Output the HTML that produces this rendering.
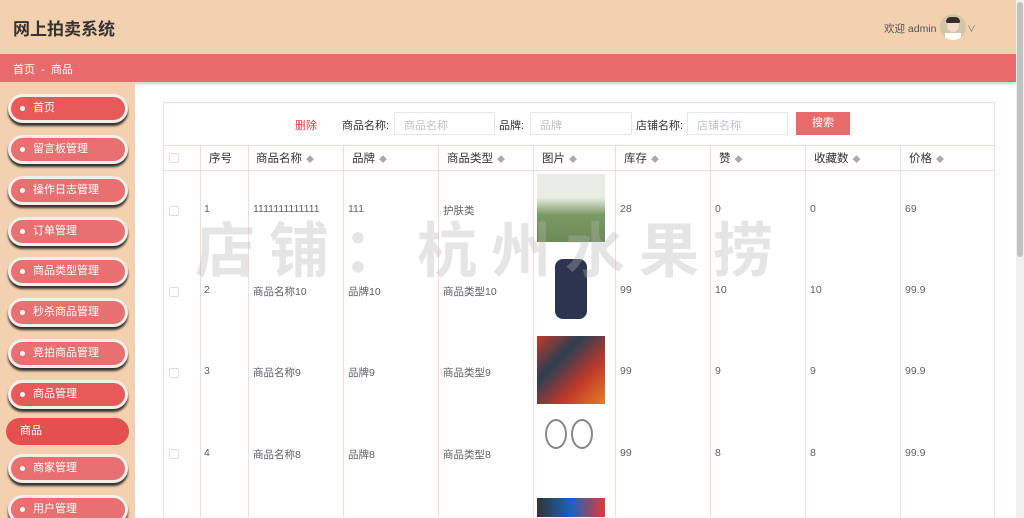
<!DOCTYPE html>
<html><head><meta charset="utf-8"><style>
*{margin:0;padding:0;box-sizing:border-box}
html,body{width:1024px;height:518px;overflow:hidden}
body{font-family:"Liberation Sans","Noto Sans CJK SC",sans-serif;background:#fff;position:relative;font-size:11px;color:#606266}
.hdr{position:absolute;left:0;top:0;width:1016px;height:54px;background:#f3d0ae}
.hdr .t{position:absolute;left:13px;top:15px;font-size:17px;font-weight:bold;color:#333}
.hdr .u{position:absolute;left:884px;top:21px;font-size:10.5px;color:#555;white-space:nowrap}
.av{position:absolute;left:940px;top:14px;width:26px;height:26px;border-radius:50%;background:#cfc7a8;overflow:hidden}
.bc{position:absolute;left:0;top:54px;width:1016px;height:28px;background:#e76b6b;color:#fff;font-size:11px;padding:7px 13px;box-shadow:0 2px 3px rgba(0,0,0,.2)}
.sb{position:absolute;left:0;top:82px;width:135px;height:436px;background:#f3d0ae}
.pill{position:absolute;left:8px;width:120px;height:29px;border-radius:15px;background:#e85a5a;border:3px solid #f3eeea;box-shadow:0 3px 2px #333;color:#fff;font-size:11px;line-height:23px;padding-left:22px}
.pill:before{content:"";position:absolute;left:9px;top:9px;width:5px;height:5px;border-radius:50%;background:#fff}
.pill.l{background:#e87070}
.sub{position:absolute;left:6px;top:418px;width:123px;height:27px;border-radius:14px;background:#e54f4f;color:#fff;line-height:27px;padding-left:14px}
.scroll{position:absolute;left:1016px;top:0;width:8px;height:518px;background:#f0f0f0}
.scroll div{position:absolute;left:1px;top:2px;width:6px;height:255px;background:#c1c1c1;border-radius:3px}
.box{position:absolute;left:163px;top:102px;width:832px;height:415px;border:1px solid #f8dada;border-bottom:none;overflow:hidden}
.srch{position:absolute;left:0;top:0;width:830px;height:43px;border-bottom:1px solid #f8dada}
.srch span{position:absolute;top:14px;font-size:11px;color:#333}
.inp{position:absolute;top:9px;height:23px;border:1px solid #e4e7ed;color:#c0c4cc;font-size:11px;padding:4px 9px}
.btn{position:absolute;left:632px;top:9px;width:54px;height:23px;background:#e76b6b;color:#fff;text-align:center;line-height:23px}
.col{position:absolute;top:43px;height:380px;border-left:1px solid #f8dada}
.th{position:absolute;top:43px;height:25px;width:830px;border-bottom:1px solid #f8dada}
.h{position:absolute;top:47px;font-size:11.5px;color:#333}
.h i{font-style:normal;color:#aaa;font-size:8px;margin-left:4px}
.c{position:absolute;font-size:10.5px;color:#606266}
.cb{position:absolute;left:5px;width:10px;height:10px;border:1px solid #dcdfe6;background:#fff;border-radius:2px}
.wm{position:absolute;left:195px;top:203px;font-size:60px;font-weight:bold;color:rgba(180,180,180,.35);letter-spacing:14px;white-space:nowrap}
.img{position:absolute;left:373px;width:68px;height:68px}
</style></head><body>
<div class="hdr"><div class="t">网上拍卖系统</div><div class="u">欢迎 admin</div>
<div class="av"><div style="position:absolute;left:7px;top:4px;width:12px;height:14px;background:#f6d9c8;border-radius:50%"></div><div style="position:absolute;left:6px;top:3px;width:14px;height:6px;background:#3a2a2a;border-radius:6px 6px 2px 2px"></div><div style="position:absolute;left:5px;top:19px;width:16px;height:8px;background:#fff"></div></div>
<div style="position:absolute;left:967px;top:22px;color:#777;font-size:9px">∨</div></div>
<div class="bc">首页 &nbsp;-&nbsp; 商品</div>
<div class="sb"></div>
<div class="pill" style="top:94px">首页</div>
<div class="pill l" style="top:135px">留言板管理</div>
<div class="pill l" style="top:176px">操作日志管理</div>
<div class="pill l" style="top:217px">订单管理</div>
<div class="pill l" style="top:257px">商品类型管理</div>
<div class="pill l" style="top:298px">秒杀商品管理</div>
<div class="pill l" style="top:339px">竞拍商品管理</div>
<div class="pill" style="top:380px">商品管理</div>
<div class="sub">商品</div>
<div class="pill l" style="top:454px">商家管理</div>
<div class="pill l" style="top:495px">用户管理</div>
<div class="box">
<div class="srch">
<span style="left:131px;color:#e53935">删除</span>
<span style="left:178px">商品名称:</span><div class="inp" style="left:230px;width:101px">商品名称</div>
<span style="left:335px">品牌:</span><div class="inp" style="left:366px;width:102px">品牌</div>
<span style="left:472px">店铺名称:</span><div class="inp" style="left:523px;width:101px">店铺名称</div>
<div class="btn">搜索</div></div>
<div class="th"></div>
<div class="col" style="left:36px"></div><div class="col" style="left:84px"></div><div class="col" style="left:179px"></div><div class="col" style="left:274px"></div><div class="col" style="left:369px"></div><div class="col" style="left:451px"></div><div class="col" style="left:546px"></div><div class="col" style="left:641px"></div><div class="col" style="left:736px"></div>
<div class="cb" style="top:50px"></div>
<div class="h" style="left:45px">序号</div>
<div class="h" style="left:92px">商品名称<i>◆</i></div>
<div class="h" style="left:188px">品牌<i>◆</i></div>
<div class="h" style="left:283px">商品类型<i>◆</i></div>
<div class="h" style="left:378px">图片<i>◆</i></div>
<div class="h" style="left:460px">库存<i>◆</i></div>
<div class="h" style="left:555px">赞<i>◆</i></div>
<div class="h" style="left:650px">收藏数<i>◆</i></div>
<div class="h" style="left:745px">价格<i>◆</i></div>
<div class="img" style="top:71px;background:linear-gradient(#e8ece4 0 35%,#7a9a62 60%,#6c8a58)"></div>
<div class="img" style="top:152px;background:#fff"><div style="position:absolute;left:18px;top:4px;width:32px;height:60px;background:#2c3450;border-radius:8px"></div></div>
<div class="img" style="top:233px;background:linear-gradient(135deg,#c0392b,#2c3e50,#c0392b,#e67e22)"></div>
<div class="img" style="top:314px;background:#fff"><div style="position:absolute;left:8px;top:2px;width:22px;height:30px;border:2px solid #888;border-radius:50%"></div><div style="position:absolute;left:34px;top:2px;width:22px;height:30px;border:2px solid #888;border-radius:50%"></div></div>
<div class="img" style="top:395px;background:linear-gradient(90deg,#333,#1565c0,#e53935)"></div>
<div class="cb" style="top:103px"></div><div class="c" style="top:100px;left:40px">1</div><div class="c" style="top:100px;left:89px">1111111111111</div><div class="c" style="top:100px;left:184px">111</div><div class="c" style="top:100px;left:279px">护肤类</div><div class="c" style="top:100px;left:456px">28</div><div class="c" style="top:100px;left:551px">0</div><div class="c" style="top:100px;left:646px">0</div><div class="c" style="top:100px;left:741px">69</div>
<div class="cb" style="top:184px"></div><div class="c" style="top:181px;left:40px">2</div><div class="c" style="top:181px;left:89px">商品名称10</div><div class="c" style="top:181px;left:184px">品牌10</div><div class="c" style="top:181px;left:279px">商品类型10</div><div class="c" style="top:181px;left:456px">99</div><div class="c" style="top:181px;left:551px">10</div><div class="c" style="top:181px;left:646px">10</div><div class="c" style="top:181px;left:741px">99.9</div>
<div class="cb" style="top:265px"></div><div class="c" style="top:262px;left:40px">3</div><div class="c" style="top:262px;left:89px">商品名称9</div><div class="c" style="top:262px;left:184px">品牌9</div><div class="c" style="top:262px;left:279px">商品类型9</div><div class="c" style="top:262px;left:456px">99</div><div class="c" style="top:262px;left:551px">9</div><div class="c" style="top:262px;left:646px">9</div><div class="c" style="top:262px;left:741px">99.9</div>
<div class="cb" style="top:346px"></div><div class="c" style="top:344px;left:40px">4</div><div class="c" style="top:344px;left:89px">商品名称8</div><div class="c" style="top:344px;left:184px">品牌8</div><div class="c" style="top:344px;left:279px">商品类型8</div><div class="c" style="top:344px;left:456px">99</div><div class="c" style="top:344px;left:551px">8</div><div class="c" style="top:344px;left:646px">8</div><div class="c" style="top:344px;left:741px">99.9</div>
</div>
<div class="wm">店铺：杭州水果捞</div>
<div class="scroll"><div></div></div>
</body></html>
